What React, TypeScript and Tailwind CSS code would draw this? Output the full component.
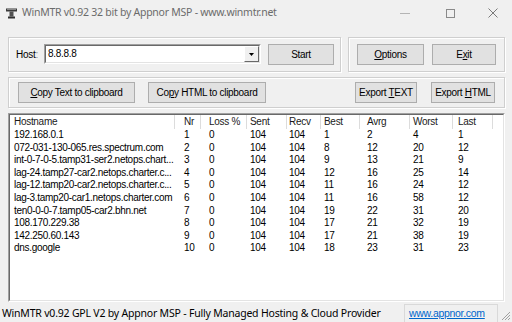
import React from "react";

const cols = [
  { label: "Hostname", cls: "w-[165px] pl-[4px]" },
  { label: "Nr", cls: "w-[26px] pl-[9px]" },
  { label: "Loss %", cls: "w-[46px] pl-[8px]" },
  { label: "Sent", cls: "w-[40px] pl-[3px]" },
  { label: "Recv", cls: "w-[34px] pl-[2px]" },
  { label: "Best", cls: "w-[39px] pl-[3px]" },
  { label: "Avrg", cls: "w-[50px] pl-[7px]" },
  { label: "Worst", cls: "w-[43px] pl-[3px]" },
  { label: "Last", cls: "w-[40px] pl-[5px]" },
];

const rows = [
  ["192.168.0.1", "1", "0", "104", "104", "1", "2", "4", "1"],
  ["072-031-130-065.res.spectrum.com", "2", "0", "104", "104", "8", "12", "20", "12"],
  ["int-0-7-0-5.tamp31-ser2.netops.chart...", "3", "0", "104", "104", "9", "13", "21", "9"],
  ["lag-24.tamp27-car2.netops.charter.c...", "4", "0", "104", "104", "12", "16", "25", "14"],
  ["lag-12.tamp20-car2.netops.charter.c...", "5", "0", "104", "104", "11", "16", "24", "12"],
  ["lag-3.tamp20-car1.netops.charter.com", "6", "0", "104", "104", "11", "16", "58", "12"],
  ["ten0-0-0-7.tamp05-car2.bhn.net", "7", "0", "104", "104", "19", "22", "31", "20"],
  ["108.170.229.38", "8", "0", "104", "104", "17", "21", "32", "19"],
  ["142.250.60.143", "9", "0", "104", "104", "17", "21", "38", "19"],
  ["dns.google", "10", "0", "104", "104", "18", "23", "31", "23"],
];

function Btn({ className, children }: { className: string; children: React.ReactNode }) {
  return (
    <button
      className={`h-[21px] shrink-0 border border-[#adadad] bg-[#e1e1e1] text-black flex items-center justify-center ${className}`}
    >
      <span className="whitespace-pre">{children}</span>
    </button>
  );
}

const group =
  "border border-[#cfcfcf] shadow-[inset_1px_1px_0_#fff,1px_1px_0_#fff] flex items-center";

export default function App() {
  return (
    <div className="w-[512px] h-[322px] bg-[#f0f0f0] flex flex-col overflow-hidden font-['Liberation_Sans',Arial,sans-serif] text-[10px] tracking-[-0.3px] text-black">
      {/* title bar */}
      <div className="h-[26px] flex items-center pl-[6px] font-['Noto_Sans',sans-serif] tracking-normal">
        <svg width="11" height="11" viewBox="0 0 11 11" className="shrink-0">
          <rect x="0" y="0.5" width="11" height="3" fill="#3a3a3a" />
          <rect x="1" y="1" width="9" height="1" fill="#8a8a8a" />
          <rect x="3.5" y="3.5" width="4" height="5" fill="#505050" />
          <rect x="2" y="8.5" width="7" height="2" fill="#2e2e2e" />
        </svg>
        <span className="ml-[5px] text-[10.5px] tracking-[-0.25px] text-[#6b6b6b]">
          WinMTR v0.92 32 bit by Appnor MSP - www.winmtr.net
        </span>
        <div className="flex-1" />
        <div className="w-[10px] h-px bg-[#b4b4b4] mr-[36px]" />
        <div className="w-[9px] h-[9px] border border-[#8a8a8a] mr-[33px]" />
        <svg width="10" height="10" viewBox="0 0 10 10" className="mr-[14px]">
          <path d="M0.5 0.5 L9.5 9.5 M9.5 0.5 L0.5 9.5" stroke="#7a7a7a" strokeWidth="1" />
        </svg>
      </div>

      <div className="flex flex-col pt-[11px] pl-[8px] pr-[7px]">
        {/* host row */}
        <div className="flex gap-[7px] h-[35px]">
          <div className={`${group} w-[333px] pl-[7px]`}>
            <span className="w-[28px]">
              Host<span className="text-[#8a8a8a]">:</span>
            </span>
            <div className="h-[20px] w-[217px] border-t border-l border-[#a0a0a0] border-b border-r border-b-white border-r-white mb-[1px]">
              <div className="h-full flex border-t border-l border-[#696969] border-b border-r border-b-[#e3e3e3] border-r-[#e3e3e3] bg-white">
                <span className="flex-1 pl-[2px] leading-[16px]">8.8.8.8</span>
                <div className="w-[15px] h-full bg-[#f0f0f0] border-t border-l border-white border-b border-r border-b-[#696969] border-r-[#696969] flex items-center justify-center">
                  <svg width="5" height="3" viewBox="0 0 5 3">
                    <path d="M0 0 H5 L2.5 3 Z" fill="#000" />
                  </svg>
                </div>
              </div>
            </div>
            <Btn className="w-[66px] ml-[7px]">Start</Btn>
          </div>
          <div className={`${group} flex-1 pl-[8px] gap-[8px]`}>
            <Btn className="w-[67px]">
              <u>O</u>ptions
            </Btn>
            <Btn className="w-[64px]">
              E<u>x</u>it
            </Btn>
          </div>
        </div>

        {/* export row */}
        <div className={`${group} mt-[5px] h-[31px] pl-[9px] pr-[9px]`}>
          <Btn className="w-[117px]">
            <u>C</u>opy Text to clipboard
          </Btn>
          <Btn className="w-[118px] ml-[13px]">
            Co<u>p</u>y HTML to clipboard
          </Btn>
          <div className="flex-1" />
          <Btn className="w-[62px]">
            Export <u>T</u>EXT
          </Btn>
          <Btn className="w-[64px] ml-[14px]">
            Export <u>H</u>TML
          </Btn>
        </div>

        {/* results list */}
        <div className="mt-[5px] h-[189px] border-t border-l border-[#a0a0a0] border-b border-r border-b-white border-r-white">
          <div className="h-full bg-white border-t border-l border-[#696969] border-b border-r border-b-[#e3e3e3] border-r-[#e3e3e3] flex flex-col">
            <div className="h-[14px] flex shrink-0">
              {cols.map((c) => (
                <div
                  key={c.label}
                  className={`${c.cls} h-full border-r border-[#dcdcdc] leading-[14px] text-[#1a1a1a]`}
                >
                  {c.label}
                </div>
              ))}
            </div>
            {rows.map((r) => (
              <div key={r[0]} className="h-[12.6px] flex leading-[12.6px]">
                {r.map((v, i) => (
                  <div key={i} className={`${cols[i].cls} whitespace-nowrap overflow-hidden`}>
                    {v}
                  </div>
                ))}
              </div>
            ))}
          </div>
        </div>
      </div>

      {/* status bar */}
      <div className="mt-[2px] flex-1 flex items-stretch">
        <div className="w-[402px] pl-[2px] font-['Noto_Sans',sans-serif] tracking-[-0.2px] text-[10.5px] leading-[18px] whitespace-nowrap overflow-hidden">
          WinMTR v0.92 GPL V2 by Appnor MSP - Fully Managed Hosting &amp; Cloud Provider
        </div>
        <div className="w-[94px] ml-[2px] border-t border-l border-r border-[#d9d9d9] pl-[4px] text-[10.5px] leading-[17px] text-[#0066cc] underline">
          www.appnor.com
        </div>
        <div className="flex-1 flex items-end justify-end pr-[1px] pb-[1px]">
          <svg width="11" height="11" viewBox="0 0 11 11">
            <path d="M10 2 L2 10 M10 5 L5 10 M10 8 L8 10" stroke="#a0a0a0" strokeWidth="1" />
          </svg>
        </div>
      </div>
    </div>
  );
}
